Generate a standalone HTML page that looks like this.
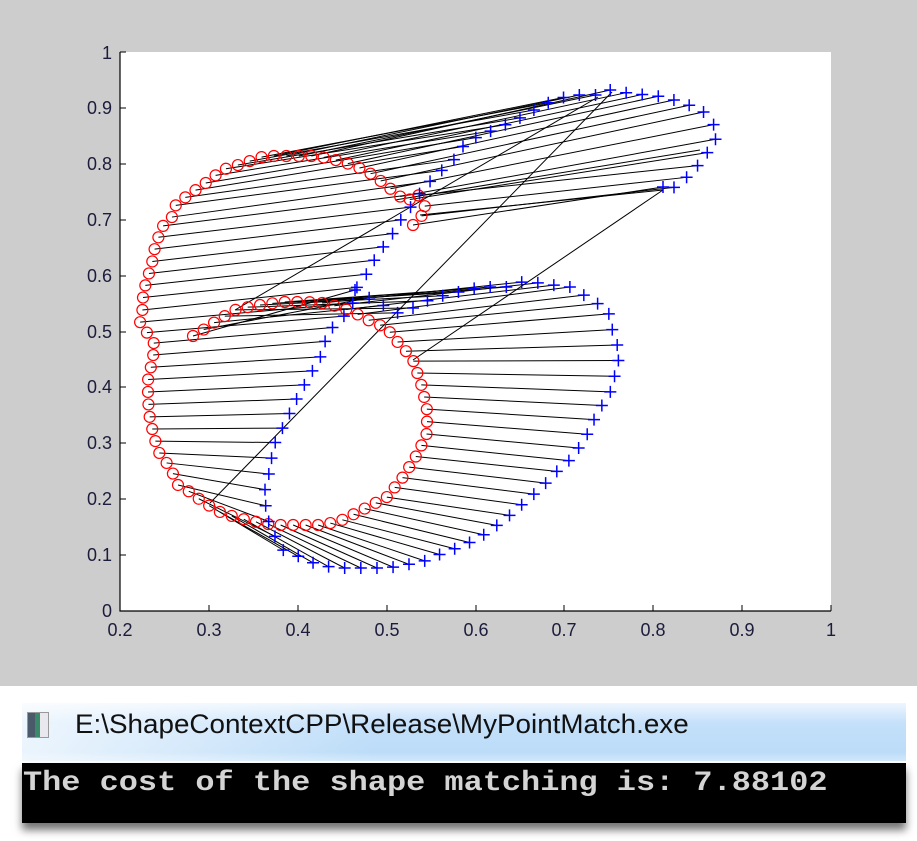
<!DOCTYPE html>
<html><head><meta charset="utf-8"><style>
body{margin:0;width:917px;height:841px;background:#fff;position:relative;overflow:hidden;font-family:"Liberation Sans",sans-serif}
#top{position:absolute;left:0;top:0;width:917px;height:686px;background:#cdcdcd}
#bar{position:absolute;left:22px;top:703px;width:884px;height:58px;background:linear-gradient(to right,rgba(255,255,255,0.7),rgba(255,255,255,0) 40%),linear-gradient(to bottom,#eef6fe,#c4e0fa 35%,#bcdcf8 85%,#d4e9fb)}
#icon{position:absolute;left:27px;top:712px;width:20px;height:24px;border:1px solid #999;background:linear-gradient(to right,#4a5a6a 0 35%,#3a8a6a 35% 60%,#e8e8ee 60%)}
#title{position:absolute;left:75px;top:709px;font-size:27px;color:#111;white-space:nowrap;transform:scaleX(1.03);transform-origin:0 0}
#con{position:absolute;left:22px;top:763px;width:884px;height:60px;background:#000;box-shadow:0 7px 8px rgba(0,0,0,0.55)}
#ctext{position:absolute;left:23px;top:768px;font-family:"Liberation Mono",monospace;font-size:28px;font-weight:bold;color:#d4d4d4;white-space:nowrap;transform:scaleX(1.14);transform-origin:0 0}
svg{position:absolute;left:0;top:0}
.t{font-family:"Liberation Sans",sans-serif;font-size:18px;fill:#1c1c3c}
</style></head><body>
<div id="top"></div>
<svg id="p" width="917" height="686">
<rect x="120" y="52" width="711" height="559" fill="#fff"/>
<g id="lines" stroke="#000" stroke-width="1" fill="none"></g>
<g id="reds" stroke="#f00" stroke-width="1.2" fill="none"></g>
<g id="blues" stroke="#00f" stroke-width="1.5" fill="none"></g>
<path d="M120 52V611H831" stroke="#000" stroke-width="1.2" fill="none"/>
<g stroke="#000" stroke-width="1">
<path d="M120 611h6M120 555h6M120 499h6M120 443h6M120 387h6M120 332h6M120 276h6M120 220h6M120 164h6M120 108h6M120 52h6"/>
<path d="M120 611v-6M209 611v-6M298 611v-6M387 611v-6M476 611v-6M564 611v-6M653 611v-6M742 611v-6M831 611v-6"/>
</g>
<g class="t" text-anchor="end">
<text x="112" y="617">0</text><text x="112" y="561">0.1</text><text x="112" y="505">0.2</text><text x="112" y="449">0.3</text><text x="112" y="393">0.4</text><text x="112" y="338">0.5</text><text x="112" y="282">0.6</text><text x="112" y="226">0.7</text><text x="112" y="170">0.8</text><text x="112" y="114">0.9</text><text x="112" y="59">1</text>
</g>
<g class="t" text-anchor="middle">
<text x="120" y="636">0.2</text><text x="209" y="636">0.3</text><text x="298" y="636">0.4</text><text x="387" y="636">0.5</text><text x="476" y="636">0.6</text><text x="564" y="636">0.7</text><text x="653" y="636">0.8</text><text x="742" y="636">0.9</text><text x="831" y="636">1</text>
</g>
</svg>
<div id="bar"></div><div id="icon"></div>
<div id="title">E:\ShapeContextCPP\Release\MyPointMatch.exe</div>
<div id="con"></div>
<div id="ctext">The cost of the shape matching is: 7.88102</div>
<script>
var R=[[413,225],[427,210],[417,193],[407,202],[392,190],[377,178],[368,172],[355,166],[340,161],[317,156],[292,156],[265,156],[253,160],[238,165],[222,170],[210,180],[200,187],[183,199],[175,206],[172,217],[162,227],[155,247],[152,263],[147,280],[143,293],[143,307],[140,322],[155,345],[152,362],[148,380],[148,400],[150,420],[155,440],[160,455],[170,467],[178,485],[190,492],[203,502],[220,512],[238,518],[257,522],[273,525],[287,525],[302,525],[323,525],[342,520],[360,511],[387,497],[403,477],[418,453],[427,433],[427,410],[422,387],[413,360],[405,350],[393,337],[387,328],[372,322],[355,313],[340,307],[322,303],[305,302],[282,302],[253,306],[235,310],[215,322],[200,332],[193,336]];
var B=[[663,187],[667,193],[692,173],[707,153],[715,143],[717,128],[712,123],[702,110],[683,103],[665,97],[647,95],[628,93],[610,90],[602,95],[587,95],[572,95],[555,100],[538,107],[527,115],[510,122],[500,128],[485,133],[465,143],[457,157],[433,178],[420,193],[413,203],[407,213],[398,223],[393,233],[387,242],[377,255],[368,272],[357,287],[355,297],[350,310],[328,332],[320,358],[307,380],[295,402],[283,427],[273,447],[270,470],[265,487],[265,500],[267,517],[273,533],[283,550],[300,557],[318,565],[337,568],[352,568],[368,568],[388,568],[422,562],[443,553],[465,545],[487,533],[510,515],[527,500],[542,487],[555,473],[573,457],[588,433],[597,413],[610,393],[613,382],[617,367],[620,353],[613,333],[608,310],[587,297],[570,287],[553,285],[540,283],[522,282],[507,287],[480,287],[433,298],[413,308],[397,313],[355,290]];
function rs(P,N){var L=[0];for(var i=1;i<P.length;i++){L.push(L[i-1]+Math.hypot(P[i][0]-P[i-1][0],P[i][1]-P[i-1][1]));}var T=L[L.length-1],out=[],j=0;for(var k=0;k<N;k++){var d=T*k/(N-1);while(j<P.length-2&&L[j+1]<d)j++;var s=(d-L[j])/((L[j+1]-L[j])||1);s=Math.min(1,Math.max(0,s));out.push([P[j][0]+s*(P[j+1][0]-P[j][0]),P[j][1]+s*(P[j+1][1]-P[j][1])]);}return out;}
var N=100,r=rs(R,N),b=rs(B,N),ns="http://www.w3.org/2000/svg";
var gl=document.getElementById('lines'),gr=document.getElementById('reds'),gb=document.getElementById('blues');
function el(g,t,a){var e=document.createElementNS(ns,t);for(var k in a)e.setAttribute(k,a[k]);g.appendChild(e);}
for(var i=0;i<N;i++){el(gl,'line',{x1:r[i][0],y1:r[i][1],x2:b[i][0],y2:b[i][1]});}
var X=[[[210,503],[612,92]],[[235,310],[598,97]],[[413,360],[663,190]],[[420,215],[663,190]],[[395,200],[700,150]]];
X.forEach(function(l){el(gl,'line',{x1:l[0][0],y1:l[0][1],x2:l[1][0],y2:l[1][1]});});
r.forEach(function(p){el(gr,'circle',{cx:p[0],cy:p[1],r:5.5});});
b.forEach(function(p){el(gb,'path',{d:'M'+(p[0]-6)+' '+p[1]+'h12M'+p[0]+' '+(p[1]-6)+'v12'});});
</script>
</body></html>
